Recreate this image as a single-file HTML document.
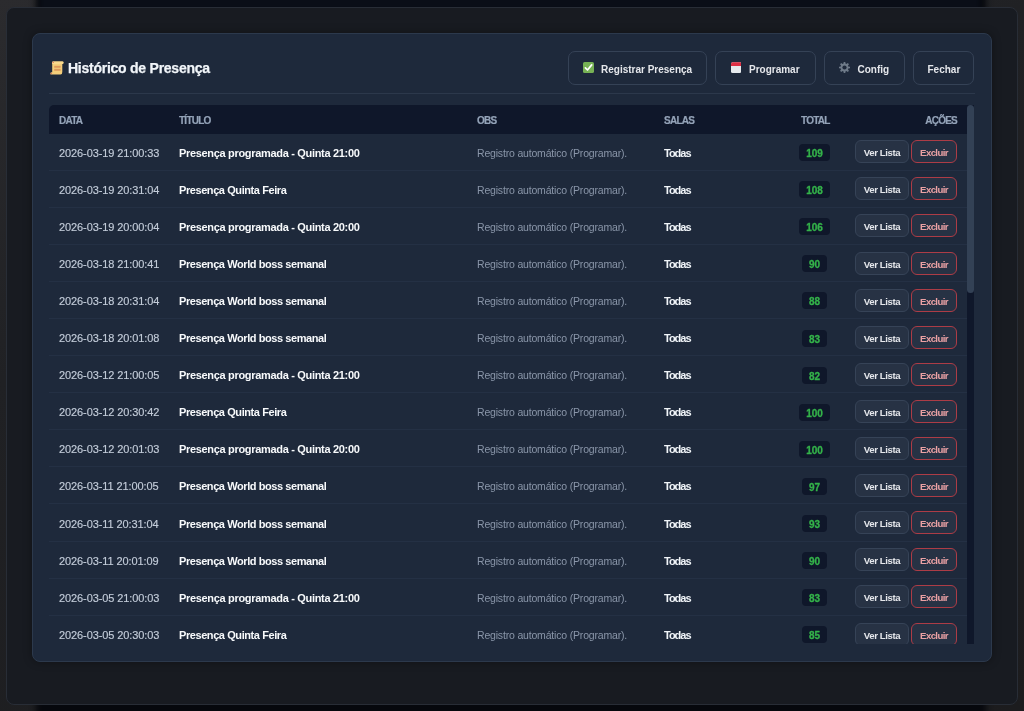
<!DOCTYPE html>
<html><head><meta charset="utf-8">
<style>
*{box-sizing:border-box;margin:0;padding:0}
html,body{width:1024px;height:711px;overflow:hidden}
body{font-family:"Liberation Sans",sans-serif;background:linear-gradient(160deg,#2b2b2e 0%,#202124 35%,#1c1c1e 100%);position:relative;-webkit-font-smoothing:antialiased}
.abs{position:absolute}
.bgp{position:absolute;left:36px;top:-20px;width:950px;height:760px;background:#06080d;filter:blur(3px)}
.bgt{position:absolute;left:40px;top:-10px;width:940px;height:20px;background:#0a0e17;filter:blur(2px)}
.outer{position:absolute;left:6px;top:7px;width:1012px;height:698px;background:#181b21;border:1px solid #282d36;border-radius:8px}
.modal{position:absolute;left:32px;top:33px;width:960px;height:629px;background:#1e293b;border:1px solid #2c394c;border-radius:8px;box-shadow:0 0 8px rgba(0,0,0,0.35)}
.title{position:absolute;left:68px;top:58px;font-weight:bold;font-size:14px;line-height:20px;color:#f1f5f9;letter-spacing:-0.25px;white-space:nowrap;-webkit-text-stroke:0.25px #f1f5f9}
.btn{position:absolute;top:51px;height:34px;border:1px solid #354256;border-radius:7px;background:#1e293b}
.bt{position:absolute;top:10px;font-size:10px;line-height:16px;font-weight:bold;color:#e5e7eb;white-space:nowrap;letter-spacing:0px}
.sep{position:absolute;left:49px;top:93px;width:926px;height:1px;background:#2c384b}
.wrap{position:absolute;left:49px;top:105px;width:918px;height:539px;overflow:hidden}
.head{position:absolute;left:0;top:0;width:918px;height:28.5px;background:#0f172a;border-top-left-radius:5px}
.h{position:absolute;top:9.4px;font-size:10px;line-height:14px;font-weight:bold;color:#94a3b8;letter-spacing:-0.75px;-webkit-text-stroke:0.2px #94a3b8;white-space:nowrap}
.r{position:absolute;left:0;width:918px;height:37.1px;border-bottom:1px solid #243044}
.c{position:absolute;top:12px;font-size:11px;line-height:14px;white-space:nowrap}
.d{left:10px;color:#c3ccd9;letter-spacing:-0.1px;-webkit-text-stroke:0.15px #c3ccd9}
.t{left:130px;color:#f8fafc;font-weight:bold;letter-spacing:-0.32px}
.o{left:428px;color:#8a96a9;font-size:10.5px;letter-spacing:-0.18px}
.s{left:615px;color:#f1f5f9;font-weight:bold;letter-spacing:-1px}
.nb{position:absolute;left:711px;width:109px;top:10.6px;height:17px;display:flex;justify-content:center}
.badge{display:inline-block;height:17px;background:#0f172a;color:#34b34a;font-weight:bold;font-size:10px;-webkit-text-stroke:0.3px #34b34a;border-radius:4px;padding:0 7px;line-height:20px}
.bv,.bx{position:absolute;top:6.8px;height:23px;line-height:23px;font-size:9.6px;font-weight:bold;border-radius:6px;text-align:center;white-space:nowrap}
.bv{left:806px;width:54px;background:#273244;border:1px solid #364357;color:#e5e7eb;letter-spacing:-0.4px}
.bx{left:862px;width:46px;background:#273244;border:1px solid #ad3c46;color:#eba1a4;letter-spacing:-0.6px}
.sb{position:absolute;left:967px;top:105px;width:7px;height:539px;background:#0f172a}
.th{position:absolute;left:0;top:0;width:7px;height:187.5px;background:#334155;border-radius:3.5px}
</style></head><body><div id="root" style="position:absolute;left:0;top:0;width:1024px;height:711px;will-change:transform">
<div class="bgp"></div><div class="bgt"></div>
<div class="outer"></div>
<div class="modal"></div>
<svg class="abs" style="left:50px;top:60.5px" width="14" height="14" viewBox="0 0 14 14">
 <path d="M3 0.4 H12.3 Q13.6 0.4 13.5 1.7 Q13.4 2.9 12.3 2.9 V11 Q12.3 13.6 10.5 13.6 H1.4 Q0.2 13.6 0.3 12.4 Q0.5 11.3 1.6 11.3 H2.2 V1.2 Q2.2 0.4 3 0.4 Z" fill="#f3cd7a"/>
 <path d="M3 0.4 H12.3 Q13.6 0.4 13.5 1.7 Q13.4 2.9 12.3 2.9 H2.2 V1.2 Q2.2 0.4 3 0.4 Z" fill="#f8d98d"/>
 <rect x="4.2" y="4.8" width="6.4" height="2" fill="#dc995c"/>
 <rect x="4.2" y="7.8" width="6.4" height="2" fill="#dc995c"/>
 <circle cx="3.2" cy="1.4" r="0.55" fill="#d5584f"/>
 <circle cx="1.2" cy="12.4" r="0.55" fill="#d5584f"/>
</svg>
<div class="title">Histórico de Presença</div>
<div class="btn" style="left:568px;width:139px"><svg class="abs" style="left:14px;top:10px" width="11" height="11" viewBox="0 0 11 11"><rect width="11" height="11" rx="1.6" fill="#77b255"/><path d="M2.4 5.9 L4.5 8 L8.7 2.9" stroke="#fff" stroke-width="1.7" fill="none" stroke-linecap="round" stroke-linejoin="round"/></svg><span class="bt" style="left:32px">Registrar Presença</span></div>
<div class="btn" style="left:715px;width:101px"><svg class="abs" style="left:15px;top:10px" width="10.4" height="11" viewBox="0 0 10.4 11"><rect y="0.2" width="10.4" height="10.8" rx="1.6" fill="#e6eaee"/><path d="M0 1.8 Q0 0.2 1.6 0.2 H8.8 Q10.4 0.2 10.4 1.8 V4 H0 Z" fill="#dd2e44"/></svg><span class="bt" style="left:33px">Programar</span></div>
<div class="btn" style="left:824px;width:81px"><svg class="abs" style="left:14px;top:10px" width="11" height="11" viewBox="0 0 11 11"><g fill="#6f7b89"><circle cx="5.5" cy="5.5" r="3.9"/><path d="M4.7 0 H6.3 L6.6 2.5 H4.4 Z M4.7 11 H6.3 L6.6 8.5 H4.4 Z M0 4.7 V6.3 L2.5 6.6 V4.4 Z M11 4.7 V6.3 L8.5 6.6 V4.4 Z"/><path d="M4.7 0 H6.3 L6.6 2.5 H4.4 Z M4.7 11 H6.3 L6.6 8.5 H4.4 Z M0 4.7 V6.3 L2.5 6.6 V4.4 Z M11 4.7 V6.3 L8.5 6.6 V4.4 Z" transform="rotate(45 5.5 5.5)"/></g><circle cx="5.5" cy="5.5" r="2.1" fill="#1e293b"/></svg><span class="bt" style="left:32.5px">Config</span></div>
<div class="btn" style="left:913px;width:61px"><span class="bt" style="left:13.5px">Fechar</span></div>
<div class="sep"></div>
<div class="wrap">
 <div class="head"><span class="h" style="left:10px">DATA</span><span class="h" style="left:130px">TÍTULO</span><span class="h" style="left:428px">OBS</span><span class="h" style="left:615px">SALAS</span><span class="h" style="left:752px">TOTAL</span><span class="h" style="right:10px">AÇÕES</span></div>
<div class="r" style="top:28.50px"><span class="c d">2026-03-19 21:00:33</span><span class="c t">Presença programada - Quinta 21:00</span><span class="c o">Registro automático (Programar).</span><span class="c s">Todas</span><span class="nb"><span class="badge">109</span></span><span class="bv">Ver Lista</span><span class="bx">Excluir</span></div>
<div class="r" style="top:65.60px"><span class="c d">2026-03-19 20:31:04</span><span class="c t" style="letter-spacing:-0.42px">Presença Quinta Feira</span><span class="c o">Registro automático (Programar).</span><span class="c s">Todas</span><span class="nb"><span class="badge">108</span></span><span class="bv">Ver Lista</span><span class="bx">Excluir</span></div>
<div class="r" style="top:102.70px"><span class="c d">2026-03-19 20:00:04</span><span class="c t">Presença programada - Quinta 20:00</span><span class="c o">Registro automático (Programar).</span><span class="c s">Todas</span><span class="nb"><span class="badge">106</span></span><span class="bv">Ver Lista</span><span class="bx">Excluir</span></div>
<div class="r" style="top:139.80px"><span class="c d">2026-03-18 21:00:41</span><span class="c t" style="letter-spacing:-0.42px">Presença World boss semanal</span><span class="c o">Registro automático (Programar).</span><span class="c s">Todas</span><span class="nb"><span class="badge">90</span></span><span class="bv">Ver Lista</span><span class="bx">Excluir</span></div>
<div class="r" style="top:176.90px"><span class="c d">2026-03-18 20:31:04</span><span class="c t" style="letter-spacing:-0.42px">Presença World boss semanal</span><span class="c o">Registro automático (Programar).</span><span class="c s">Todas</span><span class="nb"><span class="badge">88</span></span><span class="bv">Ver Lista</span><span class="bx">Excluir</span></div>
<div class="r" style="top:214.00px"><span class="c d">2026-03-18 20:01:08</span><span class="c t" style="letter-spacing:-0.42px">Presença World boss semanal</span><span class="c o">Registro automático (Programar).</span><span class="c s">Todas</span><span class="nb"><span class="badge">83</span></span><span class="bv">Ver Lista</span><span class="bx">Excluir</span></div>
<div class="r" style="top:251.10px"><span class="c d">2026-03-12 21:00:05</span><span class="c t">Presença programada - Quinta 21:00</span><span class="c o">Registro automático (Programar).</span><span class="c s">Todas</span><span class="nb"><span class="badge">82</span></span><span class="bv">Ver Lista</span><span class="bx">Excluir</span></div>
<div class="r" style="top:288.20px"><span class="c d">2026-03-12 20:30:42</span><span class="c t" style="letter-spacing:-0.42px">Presença Quinta Feira</span><span class="c o">Registro automático (Programar).</span><span class="c s">Todas</span><span class="nb"><span class="badge">100</span></span><span class="bv">Ver Lista</span><span class="bx">Excluir</span></div>
<div class="r" style="top:325.30px"><span class="c d">2026-03-12 20:01:03</span><span class="c t">Presença programada - Quinta 20:00</span><span class="c o">Registro automático (Programar).</span><span class="c s">Todas</span><span class="nb"><span class="badge">100</span></span><span class="bv">Ver Lista</span><span class="bx">Excluir</span></div>
<div class="r" style="top:362.40px"><span class="c d">2026-03-11 21:00:05</span><span class="c t" style="letter-spacing:-0.42px">Presença World boss semanal</span><span class="c o">Registro automático (Programar).</span><span class="c s">Todas</span><span class="nb"><span class="badge">97</span></span><span class="bv">Ver Lista</span><span class="bx">Excluir</span></div>
<div class="r" style="top:399.50px"><span class="c d">2026-03-11 20:31:04</span><span class="c t" style="letter-spacing:-0.42px">Presença World boss semanal</span><span class="c o">Registro automático (Programar).</span><span class="c s">Todas</span><span class="nb"><span class="badge">93</span></span><span class="bv">Ver Lista</span><span class="bx">Excluir</span></div>
<div class="r" style="top:436.60px"><span class="c d">2026-03-11 20:01:09</span><span class="c t" style="letter-spacing:-0.42px">Presença World boss semanal</span><span class="c o">Registro automático (Programar).</span><span class="c s">Todas</span><span class="nb"><span class="badge">90</span></span><span class="bv">Ver Lista</span><span class="bx">Excluir</span></div>
<div class="r" style="top:473.70px"><span class="c d">2026-03-05 21:00:03</span><span class="c t">Presença programada - Quinta 21:00</span><span class="c o">Registro automático (Programar).</span><span class="c s">Todas</span><span class="nb"><span class="badge">83</span></span><span class="bv">Ver Lista</span><span class="bx">Excluir</span></div>
<div class="r" style="top:510.80px"><span class="c d">2026-03-05 20:30:03</span><span class="c t" style="letter-spacing:-0.42px">Presença Quinta Feira</span><span class="c o">Registro automático (Programar).</span><span class="c s">Todas</span><span class="nb"><span class="badge">85</span></span><span class="bv">Ver Lista</span><span class="bx">Excluir</span></div>
</div>
<div class="sb"><div class="th"></div></div>
</div></body></html>
